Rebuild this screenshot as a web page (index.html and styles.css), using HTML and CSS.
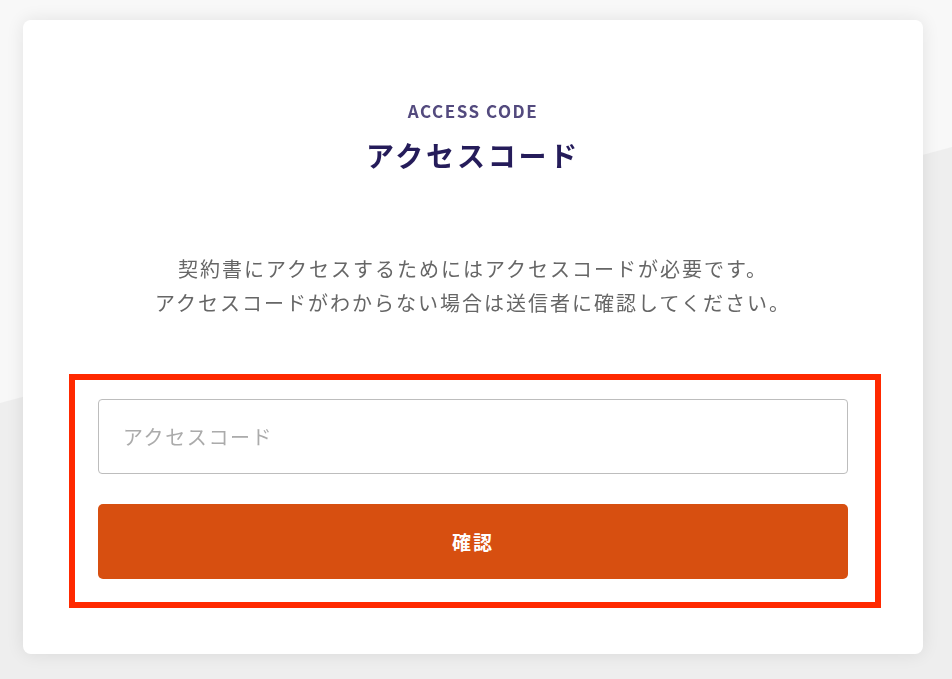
FILE: index.html
```html
<!DOCTYPE html>
<html lang="ja">
<head>
    <meta charset="UTF-8">
    <meta name="viewport" content="width=device-width, initial-scale=1.0">
    <title>アクセスコード</title>
    <link rel="stylesheet" href="styles.css">
</head>
<body>
    <div class="card">
        <p class="eyebrow">ACCESS CODE</p>
        <h1 class="title">アクセスコード</h1>
        <p class="lead">契約書にアクセスするためにはアクセスコードが必要です。<br>アクセスコードがわからない場合は送信者に確認してください。</p>
        <form class="code-form" onsubmit="return false">
            <input class="code-input" type="text" placeholder="アクセスコード">
            <button class="submit" type="submit">確認</button>
        </form>
    </div>
</body>
</html>
```

FILE: styles.css
```css
html, body {
    margin: 0;
    height: 100%;
}
body {
    background-color: #f8f8f8;
    font-family: "Noto Sans CJK JP", "Noto Sans", sans-serif;
    padding: 20px 0 0 23px;
    box-sizing: border-box;
    position: relative;
    overflow: hidden;
}
/* lower diagonal band behind the card */
body::before {
    content: "";
    position: fixed;
    inset: 0;
    background-color: #eeeeee;
    clip-path: polygon(0 403px, 100% 147px, 100% 100%, 0 100%);
    z-index: 0;
}

.card {
    position: relative;
    z-index: 1;
    width: 900px;
    height: 634px;
    box-sizing: border-box;
    background-color: #fff;
    border-radius: 8px;
    box-shadow: 0 0 18px rgba(0, 0, 0, 0.09);
    padding-top: 79px;
    text-align: center;
}

.eyebrow {
    margin: 0;
    font-size: 17px;
    line-height: 24px;
    font-weight: 700;
    letter-spacing: 0.09em;
    color: #534a7e;
}
.title {
    margin: 12px 0 0;
    font-size: 28px;
    line-height: 40px;
    font-weight: 700;
    letter-spacing: 0.1em;
    color: #251c5a;
}
.lead {
    margin: 77px 0 0;
    font-size: 20px;
    line-height: 34px;
    letter-spacing: 0.1em;
    color: #666;
}

.code-form {
    margin: 54px 42px 0 46px;
    border: 6px solid #ff2900;
    padding: 19px 27px 23px 23px;
    display: flex;
    flex-direction: column;
    gap: 30px;
}
.code-input {
    height: 75px;
    box-sizing: border-box;
    border: 1px solid #bdbdbd;
    border-radius: 4px;
    padding: 0 24px;
    font-family: inherit;
    font-size: 20px;
    letter-spacing: 0.08em;
    color: #333;
    outline: none;
}
.code-input::placeholder {
    color: #ababab;
}
.submit {
    height: 75px;
    border: none;
    border-radius: 5px;
    background-color: #d74f10;
    color: #fff;
    font-family: inherit;
    font-size: 19px;
    font-weight: 700;
    letter-spacing: 0.1em;
    cursor: pointer;
}
```
